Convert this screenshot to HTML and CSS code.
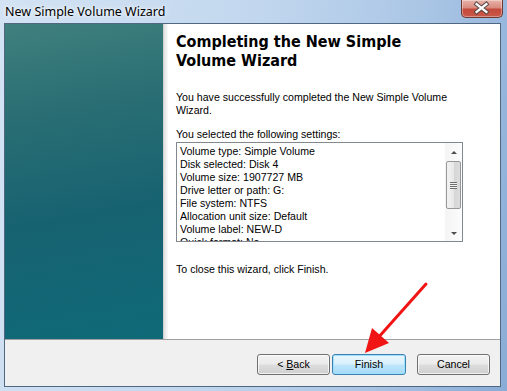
FILE: index.html
```html
<!DOCTYPE html>
<html>
<head>
<meta charset="utf-8">
<link rel="stylesheet" href="styles.css">
</head>
<body>
<div class="window">
  <div class="titlebar">
    <span class="title">New Simple Volume Wizard</span>
    <div class="close">
      <svg width="42" height="18" viewBox="0 0 42 18">
        <path d="M16 5 L26 13 M26 5 L16 13" stroke="#5a4a48" stroke-width="4.4" stroke-linecap="square"/>
        <path d="M16 5 L26 13 M26 5 L16 13" stroke="#ffffff" stroke-width="2.4" stroke-linecap="square"/>
      </svg>
    </div>
  </div>
  <div class="client">
    <div class="main">
      <div class="banner"></div>
      <div class="shadow"></div>
      <div class="content">
        <h1 class="heading">Completing the New Simple<br>Volume Wizard</h1>
        <p class="para p1">You have successfully completed the New Simple Volume<br>Wizard.</p>
        <p class="para p2">You selected the following settings:</p>
        <div class="listbox">
          <div class="lines">
            <div>Volume type: Simple Volume</div>
            <div>Disk selected: Disk 4</div>
            <div>Volume size: 1907727 MB</div>
            <div>Drive letter or path: G:</div>
            <div>File system: NTFS</div>
            <div>Allocation unit size: Default</div>
            <div>Volume label: NEW-D</div>
            <div>Quick format: No</div>
          </div>
          <div class="scrollbar">
            <div class="arrow up"></div>
            <div class="thumb"><div class="grip"></div></div>
            <div class="arrow down"></div>
          </div>
        </div>
        <p class="para p3">To close this wizard, click Finish.</p>
      </div>
    </div>
    <div class="footer">
      <button class="btn back">&lt; <u>B</u>ack</button>
      <button class="btn finish">Finish</button>
      <button class="btn cancel">Cancel</button>
    </div>
  </div>
  <svg class="annot" width="507" height="391" viewBox="0 0 507 391">
    <line x1="426" y1="284" x2="377" y2="339" stroke="#f01414" stroke-width="3" stroke-linecap="round"/>
    <polygon points="365,353 372,328 389,343" fill="#f01414"/>
  </svg>
</div>
</body>
</html>
```
FILE: styles.css
```css
html, body {
  margin: 0;
  padding: 0;
}
body {
  width: 507px;
  height: 391px;
  overflow: hidden;
  font-family: "Liberation Sans", Arial, sans-serif;
}
.window {
  position: relative;
  width: 507px;
  height: 391px;
  box-sizing: border-box;
  padding: 0 6px 4px 4px;
  display: flex;
  flex-direction: column;
  background: linear-gradient(100deg, #d3e3f4 0%, #c2d7ee 45%, #a9c5e5 75%, #89acd6 100%);
}
.titlebar {
  height: 23px;
  display: flex;
  justify-content: space-between;
  align-items: flex-start;
  padding-left: 1px;
}
.title {
  font-family: "Noto Sans", "Open Sans", sans-serif;
  font-size: 12.5px;
  line-height: 23px;
  color: #000;
  text-shadow: 0 0 6px rgba(255,255,255,0.9), 0 0 3px rgba(255,255,255,0.9);
}
.close {
  width: 42px;
  height: 18px;
  margin-right: -2px;
  box-sizing: border-box;
  border: 1px solid #6b3a35;
  border-top: none;
  border-radius: 0 0 5px 5px;
  background: linear-gradient(to bottom, #e8b4aa 0%, #d98b7f 45%, #c44a3b 55%, #c9594a 100%);
  box-shadow: inset 0 0 0 1px rgba(255,255,255,0.35);
  display: flex;
}
.close svg {
  margin: -1px 0 0 -1px;
}
.client {
  flex: 1;
  border: 1px solid #4f6780;
  background: #fff;
  display: flex;
  flex-direction: column;
}
.main {
  height: 315px;
  display: flex;
}
.banner {
  width: 158px;
  background: linear-gradient(170deg, #40807e 0%, #286d73 30%, #176271 60%, #0f6a78 100%);
}
.shadow {
  width: 5px;
  background: linear-gradient(to right, #c8c8c8 0%, #e4e4e4 30%, #f0f0f0 70%, #fafafa 100%);
}
.content {
  flex: 1;
  padding: 8px 0 0 8px;
}
.heading {
  margin: 0;
  font-family: "DejaVu Sans Condensed", "DejaVu Sans", Verdana, sans-serif;
  font-stretch: condensed;
  font-weight: bold;
  font-size: 16px;
  line-height: 19px;
  color: #000;
}
.para {
  margin: 0;
  font-size: 10.6px;
  line-height: 13px;
  color: #000;
}
.p1 { margin-top: 21px; }
.p2 { margin-top: 11px; }
.p3 { margin-top: 21px; }
.listbox {
  margin-top: 1px;
  width: 287px;
  height: 100px;
  box-sizing: border-box;
  border: 1px solid #828790;
  display: flex;
  overflow: hidden;
}
.lines {
  flex: 1;
  padding: 2px 0 0 3px;
  font-size: 10.6px;
  line-height: 13px;
  color: #000;
  overflow: hidden;
}
.scrollbar {
  width: 17px;
  display: flex;
  flex-direction: column;
  align-items: center;
  background: linear-gradient(to right, #f4f4f4, #fcfcfc);
}
.arrow {
  width: 0;
  height: 0;
  border-left: 3px solid transparent;
  border-right: 3px solid transparent;
}
.arrow.up {
  margin-top: 8px;
  border-bottom: 3px solid #4d4d4d;
}
.arrow.down {
  margin-top: 23px;
  border-top: 3px solid #4d4d4d;
}
.thumb {
  margin-top: 7px;
  width: 15px;
  height: 48px;
  box-sizing: border-box;
  border: 1px solid #979797;
  border-radius: 2px;
  background: linear-gradient(to right, #f3f3f3 0%, #e8e8e8 50%, #d6d6d6 51%, #dcdcdc 100%);
  display: flex;
  align-items: center;
  justify-content: center;
}
.grip {
  width: 7px;
  height: 7px;
  background: repeating-linear-gradient(to bottom, #6e6e6e 0, #6e6e6e 1px, #f2f2f2 1px, #f2f2f2 2px);
}
.footer {
  flex: 1;
  background: #f0f0f0;
  border-top: 1px solid #a0a0a0;
  display: flex;
  align-items: flex-start;
  padding: 14px 0 0 252px;
}
.btn {
  height: 21px;
  box-sizing: border-box;
  border: 1px solid #707070;
  border-radius: 3px;
  background: linear-gradient(to bottom, #f2f2f2 0%, #ebebeb 48%, #dddddd 52%, #cfcfcf 100%);
  box-shadow: inset 0 0 0 1px rgba(255,255,255,0.7);
  font-family: "Liberation Sans", Arial, sans-serif;
  font-size: 10.6px;
  color: #000;
  padding: 0;
  line-height: 19px;
}
.back { width: 73px; }
.finish {
  width: 74px;
  margin-left: 2px;
  border-color: #3c7fb1;
  background: linear-gradient(to bottom, #eaf6fd 0%, #d9f0fc 48%, #bee6fd 52%, #a7d9f5 100%);
  box-shadow: inset 0 0 0 1px #9fe2ff;
}
.cancel {
  width: 73px;
  margin-left: 11px;
}
.annot {
  position: absolute;
  left: 0;
  top: 0;
  pointer-events: none;
}
```
